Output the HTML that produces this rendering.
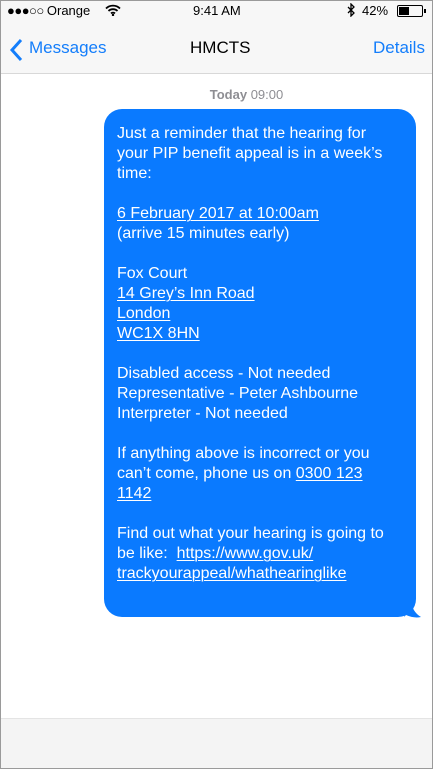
<!DOCTYPE html>
<html><head><meta charset="utf-8"><style>
*{margin:0;padding:0;box-sizing:border-box}
body{width:433px;height:769px;overflow:hidden;background:#fff;font-family:"Liberation Sans",sans-serif;position:relative}
.frame{position:absolute;inset:0;border:1px solid #9a9a9a;pointer-events:none;z-index:10}
.top{position:absolute;left:0;top:0;width:433px;height:74px;background:#f7f7f7;border-bottom:1px solid #d8d8d8}
.sb{position:absolute;top:3px;font-size:13px;color:#000}
.nav{position:absolute;top:38px;font-size:17px}
.blue{color:#147efb}
.ts{position:absolute;top:87px;width:433px;text-align:center;left:60px;font-size:13px;color:#8e8e93}
.bub{position:absolute;left:104px;top:109px;width:312px;height:508px;background:#0a7aff;border-radius:18px;color:#fff;font-size:16px;line-height:20px;padding:15px 0 0 13px;white-space:nowrap}
.bub u{text-decoration:underline;text-decoration-thickness:1px;text-underline-offset:2px}
.bot{position:absolute;left:0;top:718px;width:433px;height:51px;background:#f4f4f4;border-top:1px solid #e4e4e4}
</style></head><body>
<div class="top">
<div class="sb" style="left:7px;letter-spacing:-0.5px">●●●○○ <span style="letter-spacing:0">Orange</span></div>
<svg style="position:absolute;left:105px;top:4px" width="16" height="12" viewBox="0 0 16 12"><path d="M1 4.5a10 10 0 0 1 14 0M3.5 7a6.5 6.5 0 0 1 9 0M6 9.4a3 3 0 0 1 4 0" stroke="#000" stroke-width="1.8" fill="none"/><circle cx="8" cy="11" r="1.2"/></svg>
<div class="sb" style="left:193px">9:41 AM</div>
<svg style="position:absolute;left:347px;top:3px" width="9" height="14" viewBox="0 0 9 14"><path d="M1 4l6 6-3 3V1l3 3-6 6" stroke="#000" stroke-width="1.3" fill="none"/></svg>
<div class="sb" style="left:362px">42%</div>
<div style="position:absolute;left:397px;top:5px;width:26px;height:12px;border:1px solid #000;border-radius:2px"><div style="width:10px;height:8px;margin:1px;background:#000"></div></div>
<div style="position:absolute;left:424px;top:9px;width:2px;height:4px;background:#000"></div>
<svg style="position:absolute;left:9px;top:38px" width="14" height="24" viewBox="0 0 14 24"><path d="M12 2L3 12l9 10" stroke="#147efb" stroke-width="3" fill="none"/></svg>
<div class="nav blue" style="left:29px">Messages</div>
<div class="nav" style="left:190px">HMCTS</div>
<div class="nav blue" style="left:373px">Details</div>
</div>
<div class="ts" style="left:0;padding-left:60px"><b>Today</b> 09:00</div>
<div class="bub">Just a reminder that the hearing for<br>your PIP benefit appeal is in a week’s<br>time:<br><br><u>6 February 2017 at 10:00am</u><br>(arrive 15 minutes early)<br><br>Fox Court<br><u>14 Grey’s Inn Road</u><br><u>London</u><br><u>WC1X 8HN</u><br><br>Disabled access - Not needed<br>Representative - Peter Ashbourne<br>Interpreter - Not needed<br><br>If anything above is incorrect or you<br>can’t come, phone us on <u>0300 123</u><br><u>1142</u><br><br>Find out what your hearing is going to<br>be like:&nbsp; <u>https://www.gov.uk/</u><br><u>trackyourappeal/whathearinglike</u></div>
<svg style="position:absolute;left:400px;top:590px" width="24" height="30" viewBox="0 0 24 30"><path d="M4 27L10 8Q12 22 21 27Q14 28.5 6 25Z" fill="#0a7aff"/></svg>
<div class="bot"></div>
<div class="frame"></div>
</body></html>
